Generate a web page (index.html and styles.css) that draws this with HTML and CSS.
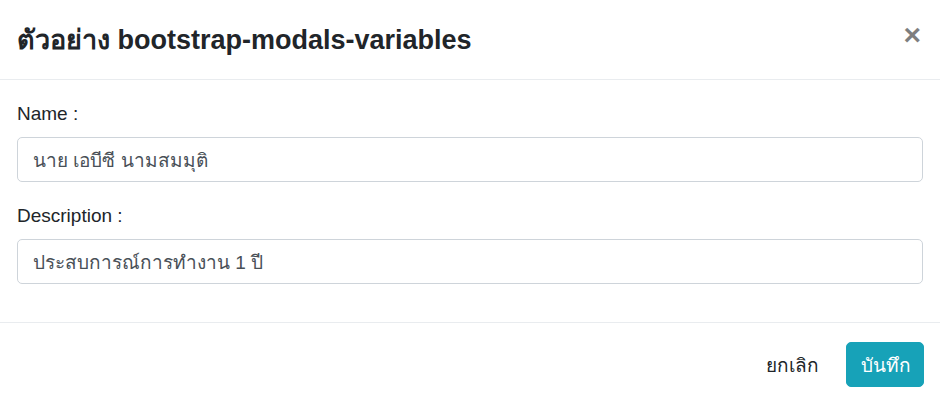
FILE: index.html
```html
<!DOCTYPE html>
<html lang="th">
<head>
<meta charset="utf-8">
<title>Modal</title>
<link rel="stylesheet" href="styles.css">
</head>
<body>
<div class="modal">
  <div class="modal-header">
    <h4 class="modal-title">ตัวอย่าง bootstrap-modals-variables</h4>
    <button class="close" type="button" aria-label="Close">×</button>
  </div>
  <div class="modal-body">
    <div class="form-group">
      <label class="form-label">Name :</label>
      <input class="form-control" type="text" value="นาย เอบีซี นามสมมุติ">
    </div>
    <div class="form-group">
      <label class="form-label">Description :</label>
      <input class="form-control" type="text" value="ประสบการณ์การทำงาน 1 ปี">
    </div>
  </div>
  <div class="modal-footer">
    <button class="btn btn-link" type="button">ยกเลิก</button>
    <button class="btn btn-info" type="button">บันทึก</button>
  </div>
</div>
</body>
</html>
```
FILE: styles.css
```css
html, body {
  margin: 0;
  padding: 0;
  background: #fff;
}
body {
  font-family: "Liberation Sans", Arial, sans-serif;
  font-size: 19px;
  line-height: 28px;
  color: #212529;
}
.modal {
  width: 940px;
  height: 405px;
  display: flex;
  flex-direction: column;
  background: #fff;
}
.modal-header {
  height: 80px;
  box-sizing: border-box;
  padding: 0 17px;
  border-bottom: 1px solid #e9ecef;
  display: flex;
  align-items: center;
  justify-content: space-between;
}
.modal-title {
  margin: 0;
  font-size: 27px;
  font-weight: 700;
  line-height: 40px;
  color: #212529;
}
.close {
  border: 0;
  background: transparent;
  padding: 0;
  margin: 0 2px 0 0;
  font-family: "Liberation Sans", Arial, sans-serif;
  font-size: 30px;
  font-weight: 700;
  line-height: 1;
  color: #000;
  opacity: .5;
  cursor: pointer;
  position: relative;
  top: -5px;
}
.modal-body {
  padding: 20px 17px 18px;
  display: flex;
  flex-direction: column;
  gap: 20px;
}
.form-group {
  display: flex;
  flex-direction: column;
}
.form-label {
  margin-bottom: 9px;
}
.form-control {
  box-sizing: border-box;
  height: 45px;
  width: 100%;
  padding: 0 15px;
  border: 1px solid #ced4da;
  border-radius: 5px;
  font-family: "Liberation Sans", Arial, sans-serif;
  font-size: 19px;
  color: #495057;
  background: #fff;
  margin: 0;
}
.modal-footer {
  margin-top: 20px;
  border-top: 1px solid #e9ecef;
  padding: 19px 16px 18px;
  display: flex;
  justify-content: flex-end;
  align-items: center;
  gap: 12px;
}
.btn {
  box-sizing: border-box;
  height: 45px;
  padding: 0 14px;
  border: 1px solid transparent;
  border-radius: 5px;
  font-family: "Liberation Sans", Arial, sans-serif;
  font-size: 19px;
  cursor: pointer;
  margin: 0;
}
.btn-link {
  background: transparent;
  color: #212529;
}
.btn-info {
  width: 78px;
  background: #17a2b8;
  border-color: #17a2b8;
  color: #fff;
}
```
